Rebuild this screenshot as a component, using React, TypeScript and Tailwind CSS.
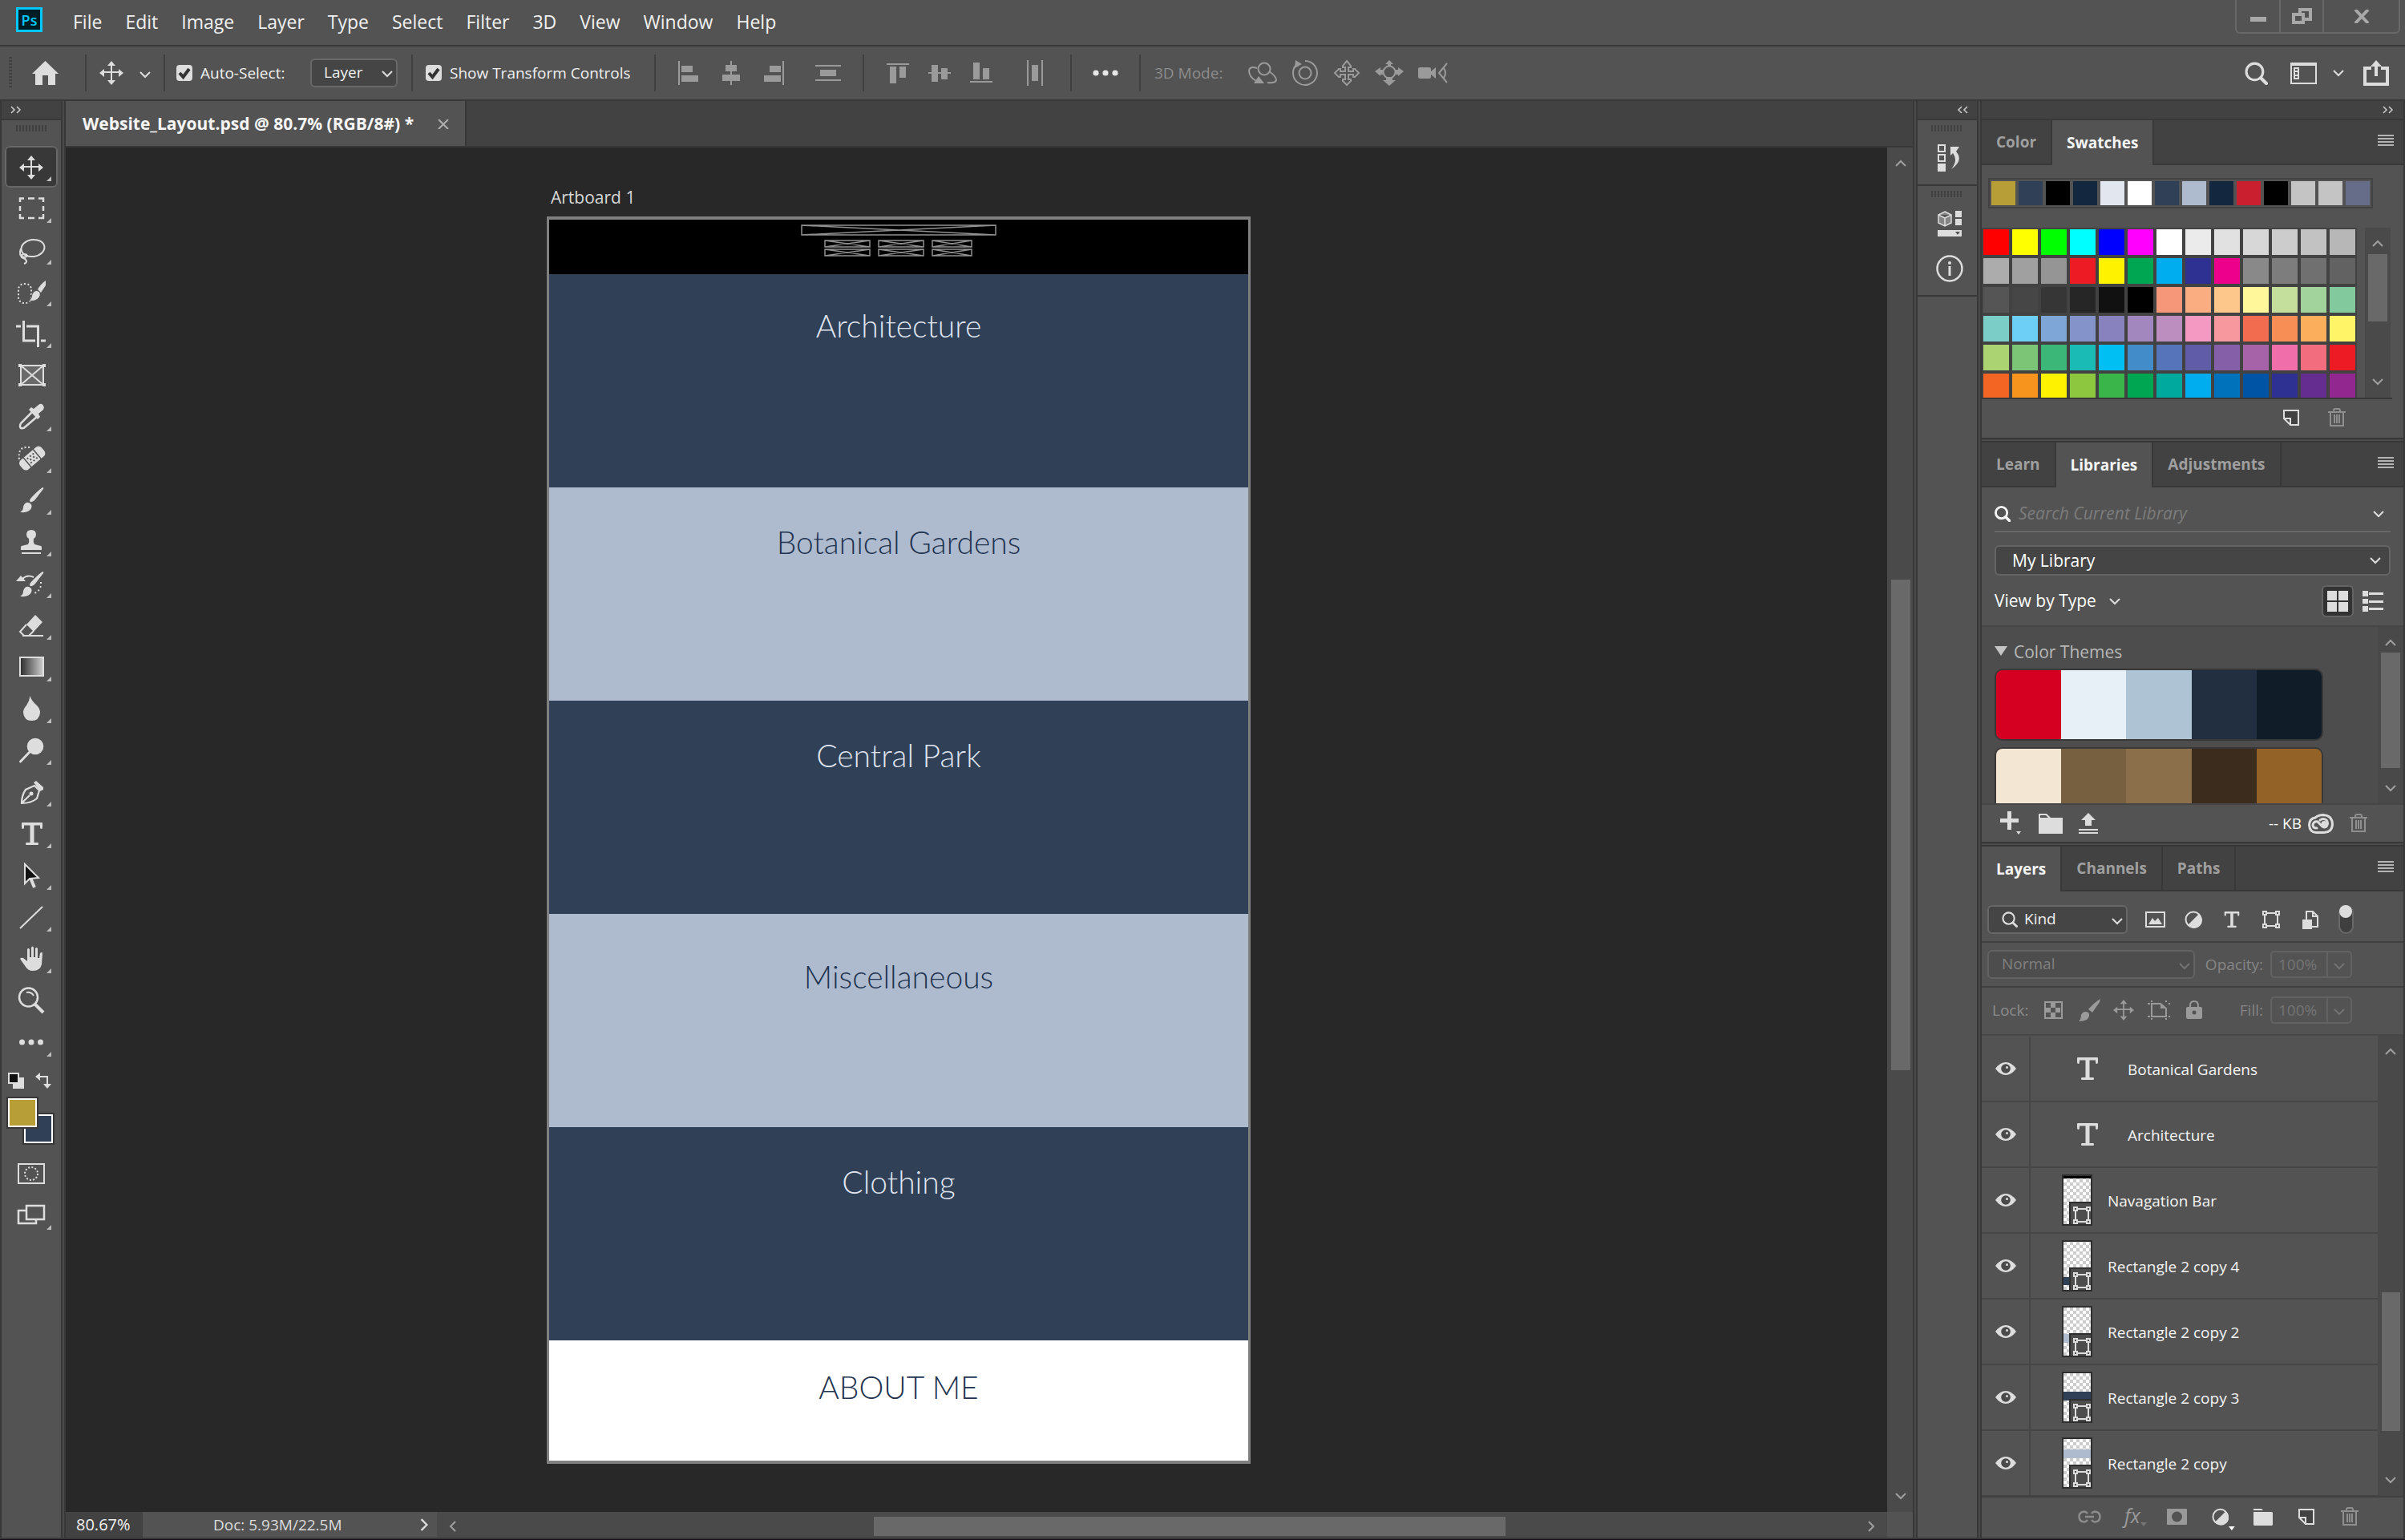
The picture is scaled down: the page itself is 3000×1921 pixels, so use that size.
import React from "react";

type Kids = { children?: React.ReactNode };

const FG = "#dddddd";
const DIM = "#9a9a9a";

/* ---------- shared pieces ---------- */

function Chevron({ dir = "down", color = FG, size = 14 }: { dir?: "up" | "down" | "left" | "right"; color?: string; size?: number }) {
  const d = {
    down: "M1 4 L7 10 L13 4",
    up: "M1 10 L7 4 L13 10",
    left: "M10 1 L4 7 L10 13",
    right: "M4 1 L10 7 L4 13",
  }[dir];
  return (
    <svg width={size} height={size} viewBox="0 0 14 14" fill="none" stroke={color} strokeWidth="2" aria-hidden="true">
      <path d={d} />
    </svg>
  );
}

function DoubleChevron({ dir }: { dir: "left" | "right" }) {
  return (
    <svg width="14" height="10" viewBox="0 0 14 10" fill="none" stroke="#c8c8c8" strokeWidth="1.6" aria-hidden="true">
      <path d={dir === "right" ? "M1 1 L5 5 L1 9 M8 1 L12 5 L8 9" : "M6 1 L2 5 L6 9 M13 1 L9 5 L13 9"} />
    </svg>
  );
}

function Grip() {
  return (
    <svg width="40" height="8" viewBox="0 0 40 8" stroke="#404040" strokeWidth="2" aria-hidden="true">
      <path d="M1 0V8M5 0V8M9 0V8M13 0V8M17 0V8M21 0V8M25 0V8M29 0V8M33 0V8M37 0V8" />
    </svg>
  );
}

function MovePath({ color = FG }: { color?: string }) {
  return (
    <g fill={color}>
      <path d="M14 4h2v9h9v2h-9v11h-2v-11h-9v-2h9z" />
      <path d="M15 0l5 6h-10zM15 30l-5-6h10zM0 15l6-5v10zM30 15l-6 5v-10z" />
    </g>
  );
}

function SearchIcon({ size = 28, color = FG, w = 3 }: { size?: number; color?: string; w?: number }) {
  return (
    <svg width={size} height={size} viewBox="0 0 28 28" fill="none" stroke={color} strokeWidth={w} strokeLinecap="round" aria-hidden="true">
      <circle cx="12" cy="12" r="10" />
      <path d="M19.5 19.5 L26 26" strokeWidth={w + 1} />
    </svg>
  );
}

function TrashIcon() {
  return (
    <svg width="22" height="24" viewBox="0 0 22 24" fill="none" stroke="#8f8f8f" strokeWidth="2" aria-hidden="true">
      <path d="M0 5H22M7 5V3Q7 1 9 1H13Q15 1 15 3V5M3 5V22H19V5M8 8V19M11 8V19M14 8V19" />
    </svg>
  );
}

function NewIcon() {
  return (
    <svg width="20" height="20" viewBox="0 0 20 20" fill="none" stroke={FG} strokeWidth="2" aria-hidden="true">
      <path d="M1 11V1H19V19H9L1 11H9V19" fill="#424242" />
    </svg>
  );
}

function TypeIcon({ w = 26, h = 28 }: { w?: number; h?: number }) {
  return (
    <svg width={w} height={h} viewBox="0 0 26 28" fill={FG} aria-hidden="true">
      <path d="M1 0H25Q26 0 26 1V6Q26 8 24.500 8Q23 8 23 6V3.500H15.500V25H20Q21 25 21 26.500Q21 28 20 28H6Q5 28 5 26.500Q5 25 6 25H10.500V3.500H3V6Q3 8 1.500 8Q0 8 0 6V1Q0 0 1 0Z" />
    </svg>
  );
}

function ShapeIcon({ size = 22 }: { size?: number }) {
  return (
    <svg width={size} height={size} viewBox="0 0 22 22" fill="none" stroke={FG} strokeWidth="2" aria-hidden="true">
      <path d="M6 3H16M6 19H16M3 6V16M19 6V16" />
      <path d="M1 1h4v4h-4zM17 1h4v4h-4zM1 17h4v4h-4zM17 17h4v4h-4z" />
    </svg>
  );
}

function AdjustIcon() {
  return (
    <svg width="22" height="22" viewBox="0 0 22 22" aria-hidden="true">
      <circle cx="11" cy="11" r="9.500" fill="none" stroke={FG} strokeWidth="2" />
      <path d="M18 4A10 10 0 1 1 4 18Z" fill={FG} />
    </svg>
  );
}

function MenuLines() {
  return (
    <button type="button" aria-label="Panel menu" className="ml-auto mr-3 flex h-full items-center pb-1">
      <svg width="20" height="14" viewBox="0 0 20 14" stroke="#b4b4b4" strokeWidth="2" aria-hidden="true">
        <path d="M0 1H20M0 5H20M0 9H20M0 13H20" />
      </svg>
    </button>
  );
}

/* ---------- top bars ---------- */

const menus = ["File", "Edit", "Image", "Layer", "Type", "Select", "Filter", "3D", "View", "Window", "Help"];

function MenuBar() {
  return (
    <header className="flex h-[58px] shrink-0 items-start border-b-2 border-[#383838] bg-[#535353]">
      <div className="ml-5 mt-[9px] flex h-[31px] w-[33px] items-center justify-center border-[3px] border-[#00c8ff] bg-[#001d26] text-[18px] font-semibold leading-none text-[#00c8ff]">
        Ps
      </div>
      <nav className="ml-6 flex h-[54px] items-center gap-px">
        {menus.map((m) => (
          <button key={m} type="button" className="h-10 px-[14px] text-[23px] text-[#f0f0f0]">
            {m}
          </button>
        ))}
      </nav>
      <div className="ml-auto mr-[6px] flex h-[42px] rounded-b-md border-2 border-t-0 border-[#686868]">
        <button type="button" aria-label="Minimize" className="flex w-[55px] items-center justify-center border-r-2 border-[#686868]">
          <span className="mt-2 h-[6px] w-5 bg-[#a8a8a8]" />
        </button>
        <button type="button" aria-label="Restore" className="flex w-[54px] items-center justify-center border-r-2 border-[#686868]">
          <svg width="25" height="21" viewBox="0 0 25 21" fill="none" stroke="#a8a8a8" strokeWidth="4" aria-hidden="true">
            <path d="M10 6V2H23V14H16M2 8H14V18H2Z" />
          </svg>
        </button>
        <button type="button" aria-label="Close" className="flex w-[93px] items-center justify-center">
          <svg width="20" height="17" viewBox="0 0 20 17" stroke="#a8a8a8" strokeWidth="4" aria-hidden="true">
            <path d="M2 0L18 17M18 0L2 17" />
          </svg>
        </button>
      </div>
    </header>
  );
}

function Sep() {
  return <span className="h-[46px] w-[2px] shrink-0 bg-[#404040]" />;
}

function Check({ label, id }: { label: string; id: string }) {
  return (
    <label htmlFor={id} className="flex items-center gap-[10px] whitespace-nowrap text-[19px] text-[#f0f0f0]">
      <span className="relative flex h-5 w-5">
        <input id={id} type="checkbox" defaultChecked className="h-5 w-5 appearance-none rounded-[4px] bg-[#dddddd]" />
        <svg className="pointer-events-none absolute inset-0" width="20" height="20" viewBox="0 0 20 20" fill="none" stroke="#333333" strokeWidth="4" aria-hidden="true">
          <path d="M4 10L8.500 15L16 5" />
        </svg>
      </span>
      {label}
    </label>
  );
}

function ToolButton({ label, w, children }: Kids & { label: string; w: number }) {
  return (
    <button type="button" aria-label={label} className="flex items-center justify-center">
      <svg width={w} height="34" viewBox={`0 0 ${w} 34`} fill={DIM} aria-hidden="true">
        {children}
      </svg>
    </button>
  );
}

function OptionsBar() {
  return (
    <div className="flex h-[68px] shrink-0 items-center border-b-2 border-[#383838] bg-[#535353]">
      <svg width="6" height="40" viewBox="0 0 6 40" className="ml-[10px]" stroke="#404040" strokeWidth="4" strokeDasharray="2 2" aria-hidden="true">
        <path d="M3 0V40" />
      </svg>
      <button type="button" aria-label="Home" className="ml-6 flex w-[66px]">
        <svg width="33" height="30" viewBox="0 0 33 30" fill={FG} aria-hidden="true">
          <path d="M16.500 0L33 16H29V30H20V18H13V30H4V16H0Z" />
        </svg>
      </button>
      <Sep />
      <button type="button" aria-label="Move tool" className="ml-4 flex w-20 items-center gap-5">
        <svg width="30" height="30" viewBox="0 0 30 30" aria-hidden="true"><MovePath /></svg>
        <span className="mt-1"><Chevron /></span>
      </button>
      <Sep />
      <div className="ml-[14px] w-[167px]"><Check id="auto" label="Auto-Select:" /></div>
      <div className="relative mr-[17px] h-9 w-[109px]">
        <select aria-label="Auto-select target" className="h-9 w-full appearance-none rounded-[6px] border-2 border-[#686868] bg-[#454545] pb-[2px] pl-[15px] text-[19px] text-[#f0f0f0]">
          <option>Layer</option>
        </select>
        <span className="pointer-events-none absolute right-[6px] top-[12px]"><Chevron /></span>
      </div>
      <Sep />
      <div className="ml-4 w-[285px]"><Check id="transform" label="Show Transform Controls" /></div>
      <Sep />
      <div className="ml-7 flex w-[230px] items-center gap-[29px]">
        <ToolButton label="Align left edges" w={26}><path d="M0 2h2v30h-2zM4 8h14v8h-14zM4 20h21v8h-21z" /></ToolButton>
        <ToolButton label="Align horizontal centers" w={22}><path d="M10 2h2v30h-2zM4 7h14v8h-14zM0 19h22v8h-22z" /></ToolButton>
        <ToolButton label="Align right edges" w={26}><path d="M24 2h2v30h-2zM8 8h14v8h-14zM1 20h21v8h-21z" /></ToolButton>
        <span className="ml-[10px] flex"><ToolButton label="Distribute vertically" w={32}><path d="M0 7h32v2h-32zM6 13h20v8h-20zM0 25h32v2h-32z" /></ToolButton></span>
      </div>
      <Sep />
      <div className="ml-7 flex w-[229px] items-center gap-6">
        <ToolButton label="Align top edges" w={28}><path d="M0 5h28v2h-28zM4 9h8v21h-8zM16 9h8v14h-8z" /></ToolButton>
        <ToolButton label="Align vertical centers" w={28}><path d="M0 16h28v2h-28zM4 7h8v21h-8zM16 11h8v14h-8z" /></ToolButton>
        <ToolButton label="Align bottom edges" w={28}><path d="M0 27h28v2h-28zM4 4h8v21h-8zM16 11h8v14h-8z" /></ToolButton>
        <span className="ml-[19px] flex"><ToolButton label="Distribute horizontally" w={20}><path d="M0 1h2v32h-2zM6 7h8v20h-8zM18 1h2v32h-2z" /></ToolButton></span>
      </div>
      <Sep />
      <button type="button" aria-label="More options" className="ml-[26px] flex w-[58px]">
        <svg width="32" height="8" viewBox="0 0 32 8" fill="#e6e6e6" aria-hidden="true"><circle cx="4" cy="4" r="3.600" /><circle cx="16" cy="4" r="3.600" /><circle cx="28" cy="4" r="3.600" /></svg>
      </button>
      <Sep />
      <span className="ml-[17px] w-[117px] whitespace-nowrap text-[19px] text-[#8c8c8c]">3D Mode:</span>
      <div className="flex items-center gap-[18px]">
        <ToolButton label="Orbit the 3D camera" w={36}>
          <g fill="none" stroke={DIM} strokeWidth="2"><circle cx="20" cy="12" r="7.500" /><path d="M11 11Q2 8 1 14Q1 22 10 27M26 15Q35 21 35 26Q34 30 24 29" /></g>
          <path d="M13 21L20 30H7Z" />
        </ToolButton>
        <ToolButton label="Roll the 3D camera" w={34}>
          <g fill="none" stroke={DIM} strokeWidth="2"><circle cx="17" cy="17" r="7.500" /><path d="M8 5A15 15 0 1 0 17 2M2 17A15 15 0 0 1 3 11" /></g>
          <path d="M5 1L13 6L4 11Z" />
        </ToolButton>
        <ToolButton label="Pan the 3D camera" w={34}>
          <path d="M17 2L22 8V10H19V15H25V12H27L32 17L27 22H25V19H19V25H22V27L17 32L12 27V25H15V19H9V22H7L2 17L7 12H9V15H15V10H12V8Z" fill="none" stroke={DIM} strokeWidth="2" />
        </ToolButton>
        <ToolButton label="Slide the 3D camera" w={36}>
          <circle cx="18" cy="16" r="7.500" fill="none" stroke={DIM} strokeWidth="2" />
          <path d="M18 1L23 6H20V9H16V6H13ZM18 33L10 26H14V22H22V26H26ZM0 15L7 10V13H10V19H7V21ZM36 15L29 10V13H26V19H29V21Z" />
        </ToolButton>
        <ToolButton label="Zoom the 3D camera" w={38}>
          <path d="M2 10h12q2 0 2 2v3l6-5v14l-6-5v3q0 2-2 2h-12q-2 0-2-2v-10q0-2 2-2z" />
          <path d="M36 5L26 17L36 29M32 11Q36 17 32 23" fill="none" stroke={DIM} strokeWidth="2" />
        </ToolButton>
      </div>
      <div className="ml-auto mr-5 flex items-center">
        <button type="button" aria-label="Search" className="flex"><SearchIcon size={29} /></button>
        <button type="button" aria-label="Workspace" className="ml-7 flex items-center gap-5">
          <svg width="33" height="27" viewBox="0 0 33 27" fill="none" stroke={FG} strokeWidth="2" aria-hidden="true">
            <path d="M1 1H32V26H1ZM1 3H32M5 7H10V20H5ZM5 11H10M5 16H10" />
          </svg>
          <Chevron />
        </button>
        <button type="button" aria-label="Share" className="ml-6 flex">
          <svg width="32" height="32" viewBox="0 0 32 32" fill="none" stroke={FG} strokeWidth="4" aria-hidden="true">
            <path d="M10 10H2V30H30V10H22M16 20V6" />
            <path d="M16 0L23 8H9Z" fill={FG} stroke="none" />
          </svg>
        </button>
      </div>
    </div>
  );
}

/* ---------- toolbox ---------- */

const BrushPath = () => (
  <>
    <path d="M47 10Q49 10 48 12L38 25Q35 29 32 28Q30 27 32 24Q40 15 47 10Z" />
    <path d="M20 41Q19 41 20 40Q23 39 23 34Q25 28 30 29Q35 31 33 36Q30 42 20 41Z" />
  </>
);

const tools: { name: string; corner: boolean; art: React.ReactNode }[] = [
  { name: "Move", corner: true, art: <g transform="translate(18 12)"><MovePath /></g> },
  { name: "Rectangular Marquee", corner: true, art: <path d="M19 18V13.500H24M29 13.500H37M42 13.500H48V18M48 23V29M48 33V38H42M37 38H29M24 38H19V33M19 29V23" fill="none" stroke={FG} strokeWidth="2.500" /> },
  { name: "Lasso", corner: true, art: <g fill="none" stroke={FG} strokeWidth="2"><ellipse cx="35" cy="23.500" rx="14.500" ry="10.500" transform="rotate(-8 35 23.500)" /><path d="M20 24Q18 30 20 33Q23 36 27 34Q29 31 24 31Q19 32 21 35Q27 37 27 40Q27 42 24 43" /></g> },
  { name: "Quick Selection", corner: true, art: <><rect x="17" y="16" width="16" height="24" rx="7" fill="none" stroke={FG} strokeWidth="2" strokeDasharray="2 2.500" /><path d="M51 12V18L45 27L41 23Q45 16 51 12Z" /><path d="M30 37Q34 34 34 29Q37 23 42 25Q46 28 43 33Q38 39 30 37Z" stroke="#535353" strokeWidth="1" /></> },
  { name: "Crop", corner: true, art: <path d="M14 17H20M27 17H41.500V43M23.500 10V35H38M45 35H51" fill="none" stroke={FG} strokeWidth="3" /> },
  { name: "Frame", corner: false, art: <><path d="M20 14H48V38H20ZM20 14L48 38M48 14L20 38" fill="#6a6a6a" stroke={FG} strokeWidth="2" /><path d="M17 12h4v4h-4zM47 12h4v4h-4zM17 36h4v4h-4zM47 36h4v4h-4z" /></> },
  { name: "Eyedropper", corner: true, art: <><path d="M34 20L20 34Q18 38 20 40Q23 41 26 38L40 26" fill="none" stroke={FG} strokeWidth="2.500" /><path d="M30 17L33 14L36 16L42 11Q46 8 48 12Q50 15 47 18L42 22L44 26L41 29Z" /></> },
  { name: "Spot Healing", corner: true, art: <><path d="M18 27Q16 12 27 12H32" fill="none" stroke={FG} strokeWidth="2" strokeDasharray="2 2.500" /><g transform="rotate(-40 34.500 26)"><rect x="17" y="18" width="35" height="15" rx="5" /><path d="M26.500 17V34M42.500 17V34" stroke="#535353" strokeWidth="1.500" /><path d="M29 21h2v2h-2zM33.500 21h2v2h-2zM38 21h2v2h-2zM29 28h2v2h-2zM33.500 28h2v2h-2zM38 28h2v2h-2zM31 24.500h2v2h-2zM36 24.500h2v2h-2z" fill="#535353" /></g></> },
  { name: "Brush", corner: true, art: <BrushPath /> },
  { name: "Clone Stamp", corner: true, art: <path d="M33 11Q39 11 39 17Q39 20 36 22Q35 26 37 29L45 31Q46 31 46 33V36H20V33Q20 31 21 31L29 29Q31 26 30 22Q27 20 27 17Q27 11 33 11ZM21 39H45V41H21Z" /> },
  { name: "History Brush", corner: true, art: <><g transform="translate(0 1)"><BrushPath /></g><path d="M14 23L20 16L26 23Z" /><path d="M22 20Q28 14 36 18" fill="none" stroke={FG} strokeWidth="2" /><path d="M45 24Q46 34 37 38" fill="none" stroke={FG} strokeWidth="2" strokeDasharray="2 3" /></> },
  { name: "Eraser", corner: true, art: <><path d="M27 25L38 13L47 22L36 34Z" /><path d="M27 25L19 34L24 39H30L36 33M22 39H48" fill="none" stroke={FG} strokeWidth="2" /></> },
  { name: "Gradient", corner: true, art: <rect x="19" y="14" width="29" height="23" fill="url(#ramp)" stroke={FG} strokeWidth="2" /> },
  { name: "Blur", corner: true, art: <path d="M31.500 10Q33 16 40 22Q44 26 44 31Q43 41 33.500 41Q24 41 23 31Q23 26 27 22Q31 16 31.500 10Z" /> },
  { name: "Dodge", corner: true, art: <><circle cx="38" cy="21" r="10.300" /><path d="M31 28L19.500 40" stroke={FG} strokeWidth="3" strokeLinecap="round" /></> },
  { name: "Pen", corner: true, art: <><path d="M21 40Q21 30 26 23L37 18L43 24L40 34Q33 40 21 40ZM21 40L31 30" fill="none" stroke={FG} strokeWidth="2.200" /><circle cx="33" cy="28" r="2.500" /><path d="M36 14L39 12L48 20V23L44 25Z" /></> },
  { name: "Type", corner: true, art: <g transform="translate(21 12)"><path d="M1 0H25Q26 0 26 1V6Q26 8 24.500 8Q23 8 23 6V3.500H15.500V25H20Q21 25 21 26.500Q21 28 20 28H6Q5 28 5 26.500Q5 25 6 25H10.500V3.500H3V6Q3 8 1.500 8Q0 8 0 6V1Q0 0 1 0Z" /></g> },
  { name: "Path Selection", corner: true, art: <><path d="M32 29L37 41" stroke={FG} strokeWidth="4" /><path d="M25 12V36L31 30L42 29Z" fill="#111111" stroke={FG} strokeWidth="2" /></> },
  { name: "Line", corner: true, art: <path d="M19 40L47 13" stroke={FG} strokeWidth="2" /> },
  { name: "Hand", corner: true, art: <path d="M19 26Q20 24 23 25L28 29V14Q29 12 31 14V24H33V12Q34.500 9 36 12V24H38V13Q39.500 11 41 13V25H43L44 19Q46 17 47 19L46 33Q44 41 35 41Q29 41 26 36Z" /> },
  { name: "Zoom", corner: false, art: <g fill="none" stroke={FG} strokeWidth="2.500"><circle cx="29.500" cy="22" r="11.500" /><path d="M27 16Q33 15 36 20" strokeWidth="2" /><path d="M38 31L48 41" strokeWidth="4" /></g> },
  { name: "Edit Toolbar", corner: true, art: <><circle cx="21.500" cy="26" r="3.500" /><circle cx="33" cy="26" r="3.500" /><circle cx="44.500" cy="26" r="3.500" /></> },
];

function ToolGlyph({ corner, children }: Kids & { corner: boolean }) {
  return (
    <svg width="66" height="52" viewBox="0 0 66 52" fill={FG} aria-hidden="true">
      {children}
      {corner && <path d="M58 38V44H52Z" fill="#c0c0c0" />}
    </svg>
  );
}

function Toolbox() {
  return (
    <aside className="flex w-[78px] shrink-0 flex-col border-x-2 border-[#383838] bg-[#535353]">
      <svg width="0" height="0" className="absolute" aria-hidden="true">
        <defs><linearGradient id="ramp"><stop offset="0" stopColor="#2a2a2a" /><stop offset="1" stopColor="#d0d0d0" /></linearGradient></defs>
      </svg>
      <div className="flex h-6 items-center border-b-2 border-[#383838] bg-[#424242] pl-[11px]"><DoubleChevron dir="right" /></div>
      <div className="flex h-8 items-start pl-[18px] pt-[6px]"><Grip /></div>
      <div className="flex flex-col pl-1">
        {tools.map((t, i) => (
          <button
            key={t.name}
            type="button"
            aria-label={t.name}
            className={
              i === 0
                ? "flex h-[52px] w-[66px] items-center justify-center rounded-[6px] bg-[#383838] outline-2 -outline-offset-2 outline-[#686868]"
                : "flex h-[52px] w-[66px] items-center justify-center"
            }
          >
            <ToolGlyph corner={t.corner}>{t.art}</ToolGlyph>
          </button>
        ))}
      </div>
      <div className="flex h-[42px] items-start justify-between pl-2 pr-3 pt-3">
        <button type="button" aria-label="Default colors" className="flex">
          <svg width="20" height="20" viewBox="0 0 20 20" aria-hidden="true"><path d="M6 6H20V20H6Z" fill={FG} /><path d="M1 1H13V13H1Z" fill="#111111" stroke={FG} strokeWidth="2" /></svg>
        </button>
        <button type="button" aria-label="Swap colors" className="flex">
          <svg width="20" height="20" viewBox="0 0 20 20" fill={FG} aria-hidden="true"><path d="M0 5L6 0V10ZM15 20L10 14H20Z" /><path d="M5 5H15V15" fill="none" stroke={FG} strokeWidth="2" /></svg>
        </button>
      </div>
      <div className="relative ml-[6px] h-[60px] w-[60px]">
        <button type="button" aria-label="Background color" className="absolute bottom-0 right-0 h-10 w-10 border-2 border-[#383838] bg-white p-[2px]"><span className="block h-full w-full bg-[#304057]" /></button>
        <button type="button" aria-label="Foreground color" className="absolute left-0 top-0 h-10 w-10 border-2 border-[#383838] bg-white p-[2px]"><span className="block h-full w-full bg-[#b89e36]" /></button>
      </div>
      <div className="flex flex-col pl-1 pt-[10px]">
        <button type="button" aria-label="Quick mask" className="h-[52px]">
          <ToolGlyph corner={false}><path d="M17 14H49V38H17Z" fill="none" stroke={FG} strokeWidth="2" /><circle cx="33" cy="26" r="8" fill="none" stroke={FG} strokeWidth="2" strokeDasharray="2 2.200" /></ToolGlyph>
        </button>
        <button type="button" aria-label="Screen mode" className="h-[52px]">
          <ToolGlyph corner><path d="M27 20H17V36H39V32" fill="none" stroke={FG} strokeWidth="2.500" /><path d="M27 14H49V31H27Z" fill="none" stroke={FG} strokeWidth="2.500" /></ToolGlyph>
        </button>
      </div>
    </aside>
  );
}

/* ---------- document ---------- */

const sections = [
  { title: "Architecture", cls: "h-[266px] bg-[#304057] pt-[40px] text-[#dfe4ef]" },
  { title: "Botanical Gardens", cls: "h-[266px] bg-[#aebbcf] pt-[44px] text-[#22334f]" },
  { title: "Central Park", cls: "h-[266px] bg-[#304057] pt-[44px] text-[#dfe4ef]" },
  { title: "Miscellaneous", cls: "h-[266px] bg-[#aebbcf] pt-[54px] text-[#22334f]" },
  { title: "Clothing", cls: "h-[266px] bg-[#304057] pt-[44px] text-[#dfe4ef]" },
  { title: "ABOUT ME", cls: "h-[150px] bg-white pt-[34px] text-[#22334f]" },
];

function CrossBox({ x, y, w, h }: { x: number; y: number; w: number; h: number }) {
  return <path d={`M${x} ${y}h${w}v${h}h${-w}zl${w} ${h}M${x + w} ${y}l${-w} ${h}`} />;
}

function Artboard() {
  return (
    <div className="ml-[600px] mt-[46px] w-[878px]">
      <h2 className="flex h-10 items-start pl-[5px] text-[21px] leading-[32px] text-[#d8d8d8]">Artboard 1</h2>
      <div className="border-[3px] border-y-4 border-[#808080]">
        <div className="flex h-[68px] justify-center bg-black pt-[6px]">
          <svg width="244" height="42" viewBox="0 0 244 42" fill="none" stroke="#909090" strokeWidth="1.500" aria-hidden="true">
            <CrossBox x={1} y={1} w={242} h={12} />
            {[20, 31].map((y) => (
              <g key={y}>
                <CrossBox x={30} y={y} w={56} h={8} />
                <CrossBox x={97} y={y} w={56} h={8} />
                <CrossBox x={164} y={y} w={49} h={8} />
              </g>
            ))}
          </svg>
        </div>
        {sections.map((s) => (
          <section key={s.title} className={s.cls}>
            <h3 className="text-center font-[Lato] text-[39px] font-light leading-[48px]">{s.title}</h3>
          </section>
        ))}
      </div>
    </div>
  );
}

function Document() {
  return (
    <main className="ml-[2px] flex min-w-0 flex-1 flex-col border-x-2 border-[#383838] bg-[#282828]">
      <div className="flex h-[58px] shrink-0 border-b-2 border-[#383838] bg-[#424242]">
        <div className="flex w-[500px] items-center border-r-2 border-[#383838] bg-[#535353] pl-[21px] pr-5 pt-[2px]">
          <span className="whitespace-nowrap text-[21px] font-bold text-[#f5f5f5]">Website_Layout.psd @ 80.7% (RGB/8#) *</span>
          <button type="button" aria-label="Close document" className="ml-auto">
            <svg width="14" height="12" viewBox="0 0 14 12" stroke="#b0b0b0" strokeWidth="2" aria-hidden="true"><path d="M1 0L13 12M13 0L1 12" /></svg>
          </button>
        </div>
      </div>
      <div className="flex min-h-0 flex-1">
        <div className="min-w-0 flex-1 overflow-hidden"><Artboard /></div>
        <div className="flex w-8 shrink-0 flex-col items-center bg-[#4a4a4a] py-[13px] pl-[2px]">
          <Chevron dir="up" color="#a0a0a0" />
          <div className="mt-[512px] h-[612px] w-6 bg-[#696969]" />
          <div className="mt-auto"><Chevron color="#a0a0a0" /></div>
        </div>
      </div>
      <div className="flex h-8 shrink-0 bg-[#4a4a4a]">
        <div className="flex w-24 items-center bg-[#424242] pl-[13px]">
          <input aria-label="Zoom level" defaultValue="80.67%" className="w-20 bg-transparent text-[20px] text-[#f0f0f0]" />
        </div>
        <div className="flex w-[367px] items-center bg-[#535353] pl-[88px] text-[19px] text-[#dcdcdc]">
          Doc: 5.93M/22.5M
          <span className="ml-auto mr-2"><Chevron dir="right" size={16} /></span>
        </div>
        <div className="flex flex-1 items-center px-[13px] pt-1">
          <Chevron dir="left" color="#a0a0a0" />
          <div className="ml-[518px] h-6 w-[788px] bg-[#696969]" />
          <span className="ml-auto"><Chevron dir="right" color="#a0a0a0" /></span>
        </div>
        <div className="w-8 bg-[#535353]" />
      </div>
    </main>
  );
}

/* ---------- collapsed dock ---------- */

function Dock() {
  return (
    <aside className="ml-[2px] flex w-[78px] shrink-0 flex-col border-x-2 border-[#383838] bg-[#535353]">
      <div className="flex h-6 items-center justify-end border-b-2 border-[#383838] bg-[#424242] pr-[11px]"><DoubleChevron dir="left" /></div>
      <div className="flex h-[82px] flex-col items-center border-b-2 border-[#383838] pt-[6px]">
        <Grip />
        <button type="button" aria-label="History" className="mt-4 ml-[5px]">
          <svg width="30" height="34" viewBox="0 0 30 34" fill="none" stroke={FG} strokeWidth="2" aria-hidden="true">
            <path d="M1 1H9V9H1ZM1 13H9V21H1Z" /><path d="M1 25H9V33H1Z" fill={FG} />
            <path d="M16 3H27L23 9Q33 20 17 31Q26 20 19 11L16 14Z" fill={FG} stroke="none" />
          </svg>
        </button>
      </div>
      <div className="flex h-[138px] flex-col items-center border-b-2 border-[#383838] pt-[6px]">
        <Grip />
        <button type="button" aria-label="Properties" className="mt-4 ml-[5px]">
          <svg width="32" height="34" viewBox="0 0 32 34" fill={FG} aria-hidden="true">
            <path d="M10 2L18 6V16L10 20L2 16V6ZM2 6L10 10L18 6M10 10V20" fill="#858585" stroke={FG} strokeWidth="1.500" />
            <path d="M23 1h8v8h-8zM23 11h8v8h-8zM1 25h30v8h-30z" /><path d="M23 27h6l-3 4z" fill="#535353" />
          </svg>
        </button>
        <button type="button" aria-label="Info" className="mt-[22px] ml-[5px]">
          <svg width="34" height="34" viewBox="0 0 34 34" aria-hidden="true">
            <circle cx="17" cy="17" r="15.500" fill="none" stroke={FG} strokeWidth="2.500" />
            <circle cx="17" cy="10" r="2" fill={FG} /><path d="M17 14V26" stroke={FG} strokeWidth="3" />
          </svg>
        </button>
      </div>
    </aside>
  );
}

/* ---------- right panels ---------- */

function Tabs({ items, active }: { items: string[]; active: string }) {
  return (
    <div role="tablist" className="flex h-14 shrink-0 bg-[#424242]">
      {items.map((t) => (
        <button
          key={t}
          type="button"
          role="tab"
          aria-selected={t === active}
          className={
            t === active
              ? "border-r-2 border-[#383838] bg-[#535353] px-[18px] text-[19px] font-bold text-[#f5f5f5]"
              : "border-r-2 border-b-2 border-[#383838] px-[18px] text-[19px] font-bold text-[#9f9f9f]"
          }
        >
          {t}
        </button>
      ))}
      <div className="flex flex-1 border-b-2 border-[#383838]"><MenuLines /></div>
    </div>
  );
}

const recent = ["#b89e36", "#304057", "#000000", "#13283f", "#e1e6ef", "#ffffff", "#304057", "#aebbcf", "#13283f", "#ca1f2e", "#000000", "#c4c4c4", "#c4c4c4", "#666d88"];

const swatches = [
  "#ff0000", "#ffff00", "#00ff00", "#00ffff", "#0000ff", "#ff00ff", "#ffffff", "#ebebeb", "#e1e1e1", "#d7d7d7", "#cccccc", "#c2c2c2", "#b7b7b7",
  "#acacac", "#a0a0a0", "#959595", "#ed1c24", "#fff200", "#00a651", "#00aeef", "#2e3192", "#ec008c", "#898989", "#7d7d7d", "#707070", "#626262",
  "#555555", "#464646", "#363636", "#262626", "#111111", "#000000", "#f7977a", "#f9ad81", "#fdc68a", "#fff79a", "#c4df9b", "#a2d39c", "#82ca9d",
  "#7bcdc8", "#6ecff6", "#7ea7d8", "#8493ca", "#8882be", "#a187be", "#bc8dbf", "#f49ac2", "#f6989d", "#f26c4f", "#f68e55", "#fbaf5c", "#fff467",
  "#acd372", "#7cc576", "#3bb878", "#1abbb4", "#00bff3", "#438cca", "#5574b9", "#605ca8", "#855fa8", "#a763a8", "#f06ea9", "#f26d7d", "#ed1c24",
  "#f26522", "#f7941d", "#fff200", "#8dc73f", "#39b54a", "#00a651", "#00a99d", "#00aeef", "#0072bc", "#0054a6", "#2e3192", "#662d91", "#92278f",
];

function SwatchesPanel() {
  return (
    <section className="flex h-[398px] shrink-0 flex-col border-b-2 border-[#383838] bg-[#535353]">
      <Tabs items={["Color", "Swatches"]} active="Swatches" />
      <div className="ml-2 mt-4 flex h-[38px] w-[480px] gap-1 border-2 border-[#424242] p-[2px]">
        {recent.map((c, i) => (
          <button key={i} type="button" aria-label={`Recent ${c}`} className="h-[30px] w-[30px]" style={{ background: c }} />
        ))}
      </div>
      <div className="mr-[14px] mt-6 flex h-[214px] overflow-hidden border-b-2 border-[#383838]">
        <div className="grid w-[468px] shrink-0 grid-cols-[repeat(13,32px)] auto-rows-[32px] content-start gap-1 bg-[#424242] p-[2px]">
          {swatches.map((c, i) => (
            <button key={i} type="button" aria-label={`Swatch ${c}`} style={{ background: c }} />
          ))}
        </div>
        <div className="ml-auto mr-[2px] flex w-8 flex-col items-center bg-[#4a4a4a] py-[13px]">
          <Chevron dir="up" color="#a0a0a0" />
          <div className="mt-[6px] h-[84px] w-6 bg-[#696969]" />
          <div className="mt-auto"><Chevron color="#a0a0a0" /></div>
        </div>
      </div>
      <div className="flex flex-1 items-center justify-end gap-9 pb-[2px] pr-[72px]">
        <button type="button" aria-label="New swatch"><NewIcon /></button>
        <button type="button" aria-label="Delete swatch"><TrashIcon /></button>
      </div>
    </section>
  );
}

function Theme({ colors }: { colors: string[] }) {
  return (
    <button type="button" aria-label="Color theme" className="flex h-[90px] w-[410px] shrink-0 overflow-hidden rounded-[10px] border-2 border-[#383838]">
      {colors.map((c) => (
        <span key={c} className="h-full flex-1" style={{ background: c }} />
      ))}
    </button>
  );
}

function LibrariesPanel() {
  return (
    <section className="mt-[2px] flex h-[502px] shrink-0 flex-col border-y-2 border-[#383838] bg-[#535353]">
      <Tabs items={["Learn", "Libraries", "Adjustments"]} active="Libraries" />
      <div className="mx-4 mt-3 flex h-11 items-center border-b-2 border-[#686868]">
        <SearchIcon size={20} color="#f5f5f5" w={4} />
        <input aria-label="Search Current Library" placeholder="Search Current Library" className="ml-[10px] min-w-0 flex-1 bg-transparent text-[21px] italic placeholder:text-[#7c7c7c]" />
        <span className="mr-2"><Chevron /></span>
      </div>
      <div className="relative mx-4 mt-4">
        <select aria-label="Library" className="block h-[38px] w-full appearance-none rounded-[6px] border-2 border-[#646464] bg-[#454545] pl-5 pt-[2px] text-[21px] text-white">
          <option>My Library</option>
        </select>
        <span className="pointer-events-none absolute right-3 top-3"><Chevron /></span>
      </div>
      <div className="mx-4 mb-[10px] mt-3 flex h-10 items-center">
        <button type="button" className="flex items-center gap-4 text-[21px] text-white">View by Type <Chevron /></button>
        <button type="button" aria-label="Grid view" className="ml-auto flex h-10 w-10 items-center justify-center rounded-[6px] border-2 border-[#646464] bg-[#333333]">
          <svg width="26" height="26" viewBox="0 0 26 26" fill={FG} aria-hidden="true"><path d="M0 0h12v12h-12zM14 0h12v12h-12zM0 14h12v12h-12zM14 14h12v12h-12z" /></svg>
        </button>
        <button type="button" aria-label="List view" className="ml-[11px] mr-[9px]">
          <svg width="26" height="26" viewBox="0 0 26 26" fill={FG} aria-hidden="true"><path d="M0 0h7v7h-7zM0 10h7v6h-7zM0 19h7v7h-7zM8 2h18v3h-18zM8 12h18v3h-18zM8 21h18v3h-18z" /></svg>
        </button>
      </div>
      <div className="flex h-[224px] border-y-2 border-[#464646] bg-[#4d4d4d]">
        <div className="flex flex-1 flex-col overflow-hidden pl-4">
          <button type="button" className="flex h-[52px] shrink-0 items-center gap-2 pt-3 text-left text-[21px] text-[#b8b8b8]">
            <svg width="16" height="14" viewBox="0 0 16 14" fill="#c4c4c4" className="mb-1" aria-hidden="true"><path d="M0 1H16L8 13Z" /></svg>
            Color Themes
          </button>
          <div className="flex flex-col gap-2">
            <Theme colors={["#d50021", "#e7eff7", "#aec4d5", "#212f40", "#101c27"]} />
            <Theme colors={["#f3e6d3", "#776040", "#8a6f4a", "#3c2c1e", "#926226"]} />
          </div>
        </div>
        <div className="flex w-8 flex-col items-center bg-[#494949] pb-3 pt-[13px]">
          <Chevron dir="up" color="#a0a0a0" />
          <div className="mt-[5px] h-36 w-6 bg-[#696969]" />
          <div className="mt-auto"><Chevron color="#a0a0a0" /></div>
        </div>
      </div>
      <div className="flex flex-1 items-center pl-[23px] pr-[45px]">
        <button type="button" aria-label="Add content">
          <svg width="28" height="30" viewBox="0 0 28 30" fill={FG} aria-hidden="true"><path d="M9 0h5v9h9v5h-9v9h-5v-9h-9v-5h9zM20 25h6l-3 4z" /></svg>
        </button>
        <button type="button" aria-label="New group" className="ml-5">
          <svg width="30" height="26" viewBox="0 0 30 26" fill={FG} aria-hidden="true"><path d="M0 1H10L15 6H30V26H0ZM2 3V6H12L9 3Z" fillRule="evenodd" /></svg>
        </button>
        <button type="button" aria-label="Upload" className="ml-5">
          <svg width="24" height="26" viewBox="0 0 24 26" fill={FG} aria-hidden="true"><path d="M12 0L21 9H16V16H8V9H3ZM0 20h24v2h-24zM0 24h24v2h-24z" /></svg>
        </button>
        <span className="ml-auto text-[19px] text-white">-- KB</span>
        <svg width="32" height="25" viewBox="0 0 32 25" fill="none" stroke={FG} strokeWidth="3" strokeLinecap="round" className="ml-2" aria-label="Creative Cloud" role="img">
          <path d="M9 5Q13 1.500 19 1.500Q30 2 30.500 13Q30 23 20 23.500H10Q2 23 1.500 14Q2 6 9 5Z" />
          <path d="M11 18Q6 18 6 14Q7 9 12 10L18 16Q21 18 23 16Q26 12 23 8Q19 5 15 8" strokeWidth="3" />
          <circle cx="20" cy="12.500" r="3.500" fill={FG} stroke="none" />
        </svg>
        <button type="button" aria-label="Delete" className="ml-5"><TrashIcon /></button>
      </div>
    </section>
  );
}

const EyeIcon = () => (
  <svg width="26" height="16" viewBox="0 0 26 16" aria-hidden="true">
    <path d="M0 8Q6 0 13 0Q20 0 26 8Q20 16 13 16Q6 16 0 8Z" fill={FG} />
    <circle cx="13" cy="8" r="5.800" fill="#4a4a4a" />
    <circle cx="14.500" cy="6.500" r="1.500" fill={FG} />
  </svg>
);

const layers: { name: string; bar?: { top: number; h: number; c: string } }[] = [
  { name: "Botanical Gardens" },
  { name: "Architecture" },
  { name: "Navagation Bar", bar: { top: 0, h: 3, c: "#000000" } },
  { name: "Rectangle 2 copy 4", bar: { top: 44, h: 10, c: "#304057" } },
  { name: "Rectangle 2 copy 2", bar: { top: 33, h: 11, c: "#aebbcf" } },
  { name: "Rectangle 2 copy 3", bar: { top: 23, h: 11, c: "#304057" } },
  { name: "Rectangle 2 copy", bar: { top: 13, h: 11, c: "#aebbcf" } },
];

function Thumb({ bar }: { bar: { top: number; h: number; c: string } }) {
  return (
    <span className="relative ml-[39px] block h-16 w-[38px] overflow-hidden border-2 border-[#2e2e2e] bg-[conic-gradient(#fff_25%,#ccc_0_50%,#fff_0_75%,#ccc_0)] bg-[length:8px_8px]">
      <span className="absolute inset-x-0" style={{ top: bar.top, height: bar.h, background: bar.c }} />
      <span className="absolute bottom-0 right-0 flex h-7 w-[27px] items-end justify-end border-l-2 border-t-2 border-[#2e2e2e] bg-[#4d4d4d]">
        <ShapeIcon />
      </span>
    </span>
  );
}

function Percent({ label, id }: { label: string; id: string }) {
  return (
    <div className="ml-auto mr-16 flex items-center">
      <label htmlFor={id} className="mr-[9px] text-[19px] text-[#858585]">{label}</label>
      <div className="flex h-[34px] w-[102px] items-center rounded-[5px] border-2 border-[#626262]">
        <input id={id} defaultValue="100%" className="h-full w-[70px] border-r-2 border-[#626262] bg-transparent pl-2 text-[19px] text-[#737373]" />
        <span className="ml-[7px] mt-1"><Chevron color="#737373" /></span>
      </div>
    </div>
  );
}

function LayersPanel() {
  const dot = "flex items-center justify-center";
  return (
    <section className="mt-[2px] flex min-h-0 flex-1 flex-col border-t-2 border-[#383838] bg-[#535353]">
      <Tabs items={["Layers", "Channels", "Paths"]} active="Layers" />
      <div className="flex h-16 shrink-0 items-center border-b-2 border-[#404040] pl-[7px] pt-2">
        <div className="relative h-9 w-[175px]">
          <select aria-label="Filter kind" className="h-9 w-full appearance-none rounded-[6px] border-2 border-[#686868] bg-[#454545] pb-[2px] pl-11 text-[19px] text-[#f0f0f0]">
            <option>Kind</option>
          </select>
          <span className="pointer-events-none absolute left-[18px] top-2"><SearchIcon size={20} w={3} /></span>
          <span className="pointer-events-none absolute right-[6px] top-[13px]"><Chevron /></span>
        </div>
        <button type="button" aria-label="Filter pixel layers" className={dot + " ml-[22px]"}>
          <svg width="25" height="20" viewBox="0 0 25 20" fill={FG} aria-hidden="true"><path d="M1 1H24V19H1Z" fill="none" stroke={FG} strokeWidth="2" /><path d="M4 16L9 8L12 12L16 8L21 16Z" /></svg>
        </button>
        <button type="button" aria-label="Filter adjustment layers" className={dot + " ml-6"}><AdjustIcon /></button>
        <button type="button" aria-label="Filter type layers" className={dot + " ml-[27px]"}><TypeIcon w={20} h={20} /></button>
        <button type="button" aria-label="Filter shape layers" className={dot + " ml-7"}><ShapeIcon /></button>
        <button type="button" aria-label="Filter smart objects" className={dot + " ml-7"}>
          <svg width="20" height="23" viewBox="0 0 20 23" aria-hidden="true"><path d="M5 11V1H13L19 7V20H12M13 1V7H19" fill="none" stroke={FG} strokeWidth="2" /><path d="M0 11h12v12h-12z" fill={FG} /></svg>
        </button>
        <label className="relative ml-[25px] block h-9 w-[19px]">
          <input type="checkbox" role="switch" aria-label="Layer filtering" className="block h-9 w-[19px] appearance-none rounded-full border-2 border-[#686868] bg-[#3f3f3f]" />
          <span className="pointer-events-none absolute left-[1px] top-0 h-4 w-4 rounded-full bg-[#dddddd]" />
        </label>
      </div>
      <div className="flex h-14 shrink-0 items-center border-b-2 border-[#404040] pl-[7px]">
        <div className="relative h-9 w-[259px]">
          <select aria-label="Blend mode" className="h-9 w-full appearance-none rounded-[6px] border-2 border-[#626262] bg-[#4d4d4d] pb-[2px] pl-4 text-[19px] text-[#808080]">
            <option>Normal</option>
          </select>
          <span className="pointer-events-none absolute right-[6px] top-[13px]"><Chevron color="#737373" /></span>
        </div>
        <Percent id="opacity" label="Opacity:" />
      </div>
      <div className="flex h-[60px] shrink-0 items-center border-b-2 border-[#484848] pb-[2px] pl-[13px]">
        <span className="text-[19px] text-[#8c8c8c]">Lock:</span>
        <div className="ml-5 flex items-center">
          <button type="button" aria-label="Lock transparent pixels"><svg width="23" height="22" viewBox="0 0 23 22" fill={DIM} aria-hidden="true"><path d="M1 1H22V21H1Z" fill="none" stroke={DIM} strokeWidth="2" /><path d="M8 2h6v6h-6zM2 8h6v6h-6zM14 8h6v6h-6zM8 14h6v6h-6z" /></svg></button>
          <button type="button" aria-label="Lock image pixels" className="ml-5"><svg width="28" height="28" viewBox="0 0 28 28" fill={DIM} aria-hidden="true"><path d="M27 0L26 4L17 17L12 13Q20 4 27 0ZM0 28Q3 26 3 20Q6 14 12 17Q15 22 10 26Q6 28 0 28Z" /></svg></button>
          <button type="button" aria-label="Lock position" className="ml-[15px]"><svg width="26" height="26" viewBox="0 0 30 30" aria-hidden="true"><MovePath color={DIM} /></svg></button>
          <button type="button" aria-label="Lock nesting" className="ml-[17px]"><svg width="28" height="24" viewBox="0 0 28 24" fill={DIM} aria-hidden="true"><path d="M5 4H16L23 10V20H5Z" fill="none" stroke={DIM} strokeWidth="2" /><path d="M16 4L23 10H16ZM0 3h3v2h-3zM4 0h2v2h-2zM22 0h2v2h-2zM26 3h2v2h-2zM0 19h3v2h-3zM4 22h2v2h-2zM22 22h2v2h-2zM26 19h2v2h-2z" /></svg></button>
          <button type="button" aria-label="Lock all" className="ml-5"><svg width="20" height="24" viewBox="0 0 20 24" fill={DIM} aria-hidden="true"><path d="M5 9V6Q5 1 10 1Q15 1 15 6V9" fill="none" stroke={DIM} strokeWidth="2" /><path d="M2 8h16q2 0 2 2v11q0 2-2 2h-16q-2 0-2-2v-11q0-2 2-2z" /><circle cx="10" cy="15" r="2.500" fill="#535353" /></svg></button>
        </div>
        <Percent id="fill" label="Fill:" />
      </div>
      <div className="flex min-h-0 flex-1 border-b-2 border-[#404040]">
        <ul className="flex-1 overflow-hidden pt-[1px]">
          {layers.map((l) => (
            <li key={l.name} className="flex h-[82px] items-center border-b-2 border-[#464646]">
              <button type="button" aria-label={`Toggle ${l.name}`} className="flex h-full w-[61px] items-center justify-center border-r-2 border-[#464646]"><EyeIcon /></button>
              {l.bar ? <Thumb bar={l.bar} /> : <span className="ml-[58px]"><TypeIcon /></span>}
              <span className={l.bar ? "ml-[19px] pt-[2px] text-[19px] text-[#f5f5f5]" : "ml-[37px] pt-[2px] text-[19px] text-[#f5f5f5]"}>{l.name}</span>
            </li>
          ))}
        </ul>
        <div className="flex w-8 shrink-0 flex-col items-center bg-[#494949] py-[13px]">
          <Chevron dir="up" color="#a0a0a0" />
          <div className="mt-[293px] h-[173px] w-[23px] bg-[#696969]" />
          <div className="mt-auto"><Chevron color="#a0a0a0" /></div>
        </div>
      </div>
      <div className="flex h-[50px] shrink-0 items-center pb-[2px] pl-[120px]">
        <button type="button" aria-label="Link layers"><svg width="29" height="16" viewBox="0 0 29 16" fill="none" stroke="#8c8c8c" strokeWidth="2.500" aria-hidden="true"><path d="M12 4Q10 1.500 8 1.500Q1.500 2 1.500 8Q1.500 14 8 14.500Q10 14.500 12 12M17 4Q19 1.500 21 1.500Q27.500 2 27.500 8Q27.500 14 21 14.500Q19 14.500 17 12M9 8H20" /></svg></button>
        <button type="button" aria-label="Layer style" className="ml-[29px] flex w-8 items-end pb-1 text-[25px] italic leading-[28px] text-[#999999]">fx<svg width="8" height="5" viewBox="0 0 8 5" fill="#777777" aria-hidden="true"><path d="M0 0H8L4 5Z" /></svg></button>
        <button type="button" aria-label="Add mask" className="ml-[21px]"><svg width="25" height="20" viewBox="0 0 25 20" aria-hidden="true"><rect width="25" height="20" rx="1" fill="#999999" /><circle cx="12.500" cy="10" r="6.500" fill="#535353" /></svg></button>
        <button type="button" aria-label="New adjustment layer" className="ml-[31px] flex w-[29px] items-end"><AdjustIcon /><svg width="8" height="5" viewBox="0 0 8 5" fill="#ffffff" className="-mb-[6px]" aria-hidden="true"><path d="M0 0H8L4 5Z" /></svg></button>
        <button type="button" aria-label="New group" className="ml-[23px]"><svg width="24" height="21" viewBox="0 0 24 21" fill={FG} aria-hidden="true"><path d="M0 0H10L12 2H0ZM0 4H23L24 5V20L23 21H1L0 20Z" /></svg></button>
        <button type="button" aria-label="New layer" className="ml-8"><NewIcon /></button>
        <button type="button" aria-label="Delete layer" className="ml-[33px]"><TrashIcon /></button>
      </div>
    </section>
  );
}

export default function App() {
  return (
    <div className="flex h-screen w-full flex-col overflow-hidden border-b border-[#170d1b] bg-[#4a4a4a] font-['Open_Sans','Noto_Sans',sans-serif] [&_button]:shrink-0">
      <MenuBar />
      <OptionsBar />
      <div className="flex min-h-0 flex-1 border-b-2 border-[#383838]">
        <Toolbox />
        <Document />
        <Dock />
        <div className="ml-[2px] flex w-[530px] shrink-0 flex-col border-x-2 border-[#383838]">
          <div className="flex h-6 shrink-0 items-center justify-end border-b-2 border-[#383838] bg-[#424242] pr-3"><DoubleChevron dir="right" /></div>
          <SwatchesPanel />
          <LibrariesPanel />
          <LayersPanel />
        </div>
      </div>
    </div>
  );
}
